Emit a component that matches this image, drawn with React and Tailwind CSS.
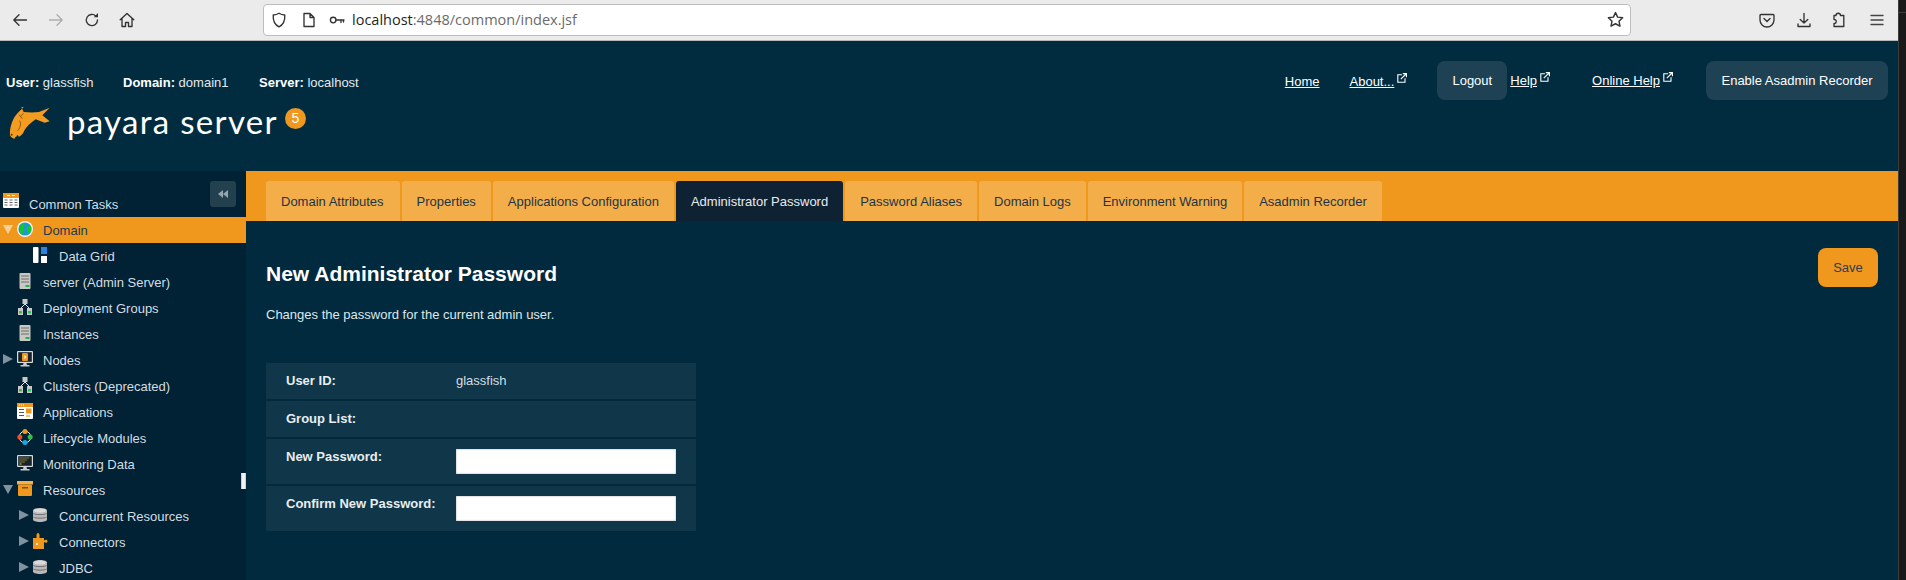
import React from 'react';

// browser toolbar glyphs
function ToolIcon({ children, className = 'text-[#333333]', size = 16 }) {
  return (
    <svg width={size} height={size} viewBox="0 0 16 16" fill="none" stroke="currentColor" strokeWidth="1.35" strokeLinecap="round" strokeLinejoin="round" className={className}>
      {children}
    </svg>
  );
}

function ExternalMark() {
  return (
    <svg width="10" height="10" viewBox="0 0 10 10" fill="none" stroke="#ffffff" strokeWidth="1.1" className="shrink-0">
      <path d="M5 1.8H.8v7.4h7.2V5.2" />
      <path d="M3.8 6.2 9 1M5.8.6h3.6v3.6" />
    </svg>
  );
}

function CalendarIcon() {
  return (
    <svg width="16" height="16" viewBox="0 0 16 16">
      <rect x="0" y="1" width="16" height="15" rx="1" fill="#fff" />
      <rect x="0" y="1" width="16" height="5" rx="1" fill="#f0981d" />
      <path d="M4 3.5h3M9 3.5h3" stroke="#fff" strokeWidth="1" />
      <path d="M1.5 8h3M6.5 8h3M11.5 8h3M1.5 10.5h3M6.5 10.5h3M11.5 10.5h3M1.5 13h3M6.5 13h3M11.5 13h3" stroke="#666" strokeWidth="1" />
    </svg>
  );
}

function GlobeIcon() {
  return (
    <svg width="16" height="16" viewBox="0 0 16 16">
      <circle cx="8" cy="8" r="8" fill="#f4f4f4" />
      <circle cx="8" cy="8" r="6.6" fill="#1b9ad6" />
      <path d="M2 5c2-1 4-2 5-3 1 2 0 5-1 6 1 2 0 4-1 6C3 12 2 8 2 5zM10 6c2-1 3-1 4-1 1 3 0 6-2 8-1-2-3-5-2-7z" fill="#18c62c" />
    </svg>
  );
}

function GridIcon() {
  return (
    <svg width="14" height="16" viewBox="0 0 14 16">
      <rect x="0" y="0" width="5.5" height="16" rx="1" fill="#fff" />
      <rect x="8" y="0" width="6" height="7" fill="#2a83e0" />
      <rect x="8" y="9" width="6" height="7" fill="#fff" />
    </svg>
  );
}

function ServerIcon() {
  return (
    <svg width="16" height="16" viewBox="0 0 16 16">
      <rect x="2.5" y="0" width="11" height="16" rx="1" fill="#c8c8c4" />
      <path d="M4 3h8M4 6h8M4 9h8" stroke="#6c6c6a" strokeWidth="1.2" />
      <rect x="8.5" y="12" width="4" height="2" fill="#2fae4a" />
    </svg>
  );
}

function TreeIcon() {
  return (
    <svg width="16" height="16" viewBox="0 0 16 16">
      <path d="M8 5 3.500 9.500M8 5l4.500 4.500" stroke="#e5e5e5" strokeWidth="1" fill="none" />
      <rect x="5.500" y="0" width="5" height="5" fill="#c9c9c9" />
      <rect x="1" y="9" width="5" height="7" fill="#c9c9c9" />
      <rect x="10" y="9" width="5" height="7" fill="#c9c9c9" />
      <rect x="2" y="12" width="3" height="2.500" fill="#2fc04d" />
      <rect x="11" y="12" width="3" height="2.500" fill="#2fc04d" />
    </svg>
  );
}

function NodesIcon() {
  return (
    <svg width="16" height="16" viewBox="0 0 16 16">
      <rect x="0" y="0" width="16" height="12" rx="1" fill="#d9d9d9" />
      <rect x="1.200" y="1.200" width="13.600" height="9.600" fill="#17242d" />
      <rect x="5" y="2" width="6" height="8" rx="1" fill="#f0981d" />
      <path d="M7.500 4v4l2-2z" fill="#fff" />
      <path d="M6.500 12h3l.5 2h2.500v1.500h-9V14H6z" fill="#c9c9c9" />
    </svg>
  );
}

function AppsIcon() {
  return (
    <svg width="16" height="16" viewBox="0 0 16 16">
      <rect x="0" y="0" width="16" height="16" rx="1" fill="#fff" />
      <rect x="0" y="0" width="16" height="4" fill="#f0981d" />
      <path d="M2 2h1M4 2h1M6 2h1" stroke="#fff" strokeWidth="1" />
      <path d="M2 6.500h5M2 9.500h5M2 12.500h5" stroke="#555" strokeWidth="1.200" />
      <rect x="9" y="5.500" width="5.500" height="5" fill="#f0981d" />
      <path d="M9 13h4" stroke="#f0981d" strokeWidth="1.200" />
    </svg>
  );
}

function LifecycleIcon() {
  return (
    <svg width="16" height="16" viewBox="0 0 16 16">
      <circle cx="8" cy="8" r="5.800" fill="none" stroke="#e9e9e9" strokeWidth="1" />
      <circle cx="8" cy="2.600" r="2.500" fill="#f0981d" />
      <circle cx="13.200" cy="8" r="2.500" fill="#2fc04d" />
      <circle cx="8" cy="13.400" r="2.500" fill="#1fa6e0" />
      <circle cx="2.800" cy="8" r="2.500" fill="#ee4d23" />
    </svg>
  );
}

function MonitorIcon() {
  return (
    <svg width="16" height="16" viewBox="0 0 16 16">
      <rect x="0" y="0" width="16" height="12" rx="1" fill="#d9d9d9" />
      <rect x="1.200" y="1.200" width="13.600" height="9.600" fill="#17242d" />
      <path d="M2.500 3h1M4.500 3h1M6.500 3h1M8.500 3h1M10.500 3h1M2.500 5h1M4.500 5h1M6.500 5h1M8.500 5h1M2.500 7h1M4.500 7h1M6.500 7h1M2.500 9h2" stroke="#e8c53a" strokeWidth="1" />
      <path d="M6.500 12h3l.5 2h2.500v1.500h-9V14H6z" fill="#c9c9c9" />
    </svg>
  );
}

function BoxIcon() {
  return (
    <svg width="16" height="16" viewBox="0 0 16 16">
      <rect x="0" y="0" width="16" height="3.500" fill="#f6b04a" />
      <rect x="1" y="3.500" width="14" height="11.500" rx="1" fill="#f0981d" />
      <rect x="5" y="6" width="6" height="1.500" fill="#7a4c10" />
    </svg>
  );
}

function DbIcon() {
  return (
    <svg width="14" height="14" viewBox="0 0 14 14">
      <path d="M0 2.500C0 1 3 0 7 0s7 1 7 2.500v9C14 13 11 14 7 14s-7-1-7-2.500z" fill="#b9b9b9" />
      <path d="M.3 5.500C2 7 12 7 13.700 5.500M.3 9C2 10.500 12 10.500 13.700 9" stroke="#6f6f6f" strokeWidth="1" fill="none" />
      <ellipse cx="7" cy="2.500" rx="6.300" ry="2" fill="#dadada" />
    </svg>
  );
}

function PuzzleIcon() {
  return (
    <svg width="16" height="16" viewBox="0 0 16 16">
      <path d="M0 5h3.500V2.500C3.500 1 4 0 5 0s1.500 1 1.500 2.500V5H11v2.500c1-1 3.500-1.200 3.500.8s-2.500 1.800-3.500.8V16H0z" fill="#f0981d" />
      <circle cx="4" cy="11" r="1" fill="#fff" />
    </svg>
  );
}

const navItems = [
  { label: 'Domain', icon: <GlobeIcon />, twisty: 'open', active: true },
  { label: 'Data Grid', icon: <GridIcon />, level: 1 },
  { label: 'server (Admin Server)', icon: <ServerIcon /> },
  { label: 'Deployment Groups', icon: <TreeIcon /> },
  { label: 'Instances', icon: <ServerIcon /> },
  { label: 'Nodes', icon: <NodesIcon />, twisty: 'closed' },
  { label: 'Clusters (Deprecated)', icon: <TreeIcon /> },
  { label: 'Applications', icon: <AppsIcon /> },
  { label: 'Lifecycle Modules', icon: <LifecycleIcon /> },
  { label: 'Monitoring Data', icon: <MonitorIcon /> },
  { label: 'Resources', icon: <BoxIcon />, twisty: 'open' },
  { label: 'Concurrent Resources', icon: <DbIcon />, twisty: 'closed', level: 1 },
  { label: 'Connectors', icon: <PuzzleIcon />, twisty: 'closed', level: 1 },
  { label: 'JDBC', icon: <DbIcon />, twisty: 'closed', level: 1 },
];

const tabs = [
  { label: 'Domain Attributes', extra: 'pr-[16px]' },
  { label: 'Properties' },
  { label: 'Applications Configuration' },
  { label: 'Administrator Password', active: true },
  { label: 'Password Aliases' },
  { label: 'Domain Logs' },
  { label: 'Environment Warning' },
  { label: 'Asadmin Recorder' },
];

function Twisty({ type, active }) {
  const color = active ? '#f8cf94' : '#7f929e';
  return (
    <svg width="10" height="10" viewBox="0 0 10 10" className="shrink-0 -mt-[3px]">
      {type === 'open' ? <path d="M0 1h10L5 10z" fill={color} /> : <path d="M0 0l10 5-10 5z" fill={color} />}
    </svg>
  );
}

function NavRow({ item }) {
  const sub = item.level === 1;
  return (
    <div className={`flex h-[26px] items-center ${item.active ? 'bg-[#f0981d] text-[#1e3a4c]' : 'text-[#d3dde3]'} ${sub ? 'pl-[19px]' : 'pl-[3px]'}`}>
      <div className="w-[14px] shrink-0">{item.twisty && <Twisty type={item.twisty} active={item.active} />}</div>
      <div className="w-[26px] shrink-0 -mt-[2px]">{item.icon}</div>
      <span>{item.label}</span>
    </div>
  );
}

function HeaderLink({ children, external, className = '' }) {
  return (
    <div className={`flex items-start gap-[3px] ${className}`}>
      <a className="underline text-white text-[13px] leading-[15px] mt-[1px]">{children}</a>
      {external && <ExternalMark />}
    </div>
  );
}

export default function App() {
  return (
    <div className="flex h-[580px] w-[1906px] overflow-hidden font-['Liberation_Sans',Arial,sans-serif] text-[13px] leading-[15px]">
      <div className="flex w-[1898px] flex-col">
        {/* browser chrome */}
        <div className="flex h-[41px] shrink-0 items-center border-b border-[#b8b8b8] bg-[#ebebeb] pb-[1px]">
          <div className="flex w-[263px] shrink-0 items-center pl-[12px]">
            <div className="w-[36px]">
              <ToolIcon><path d="M14.500 8H1.800M7 2.800 1.800 8 7 13.200" /></ToolIcon>
            </div>
            <div className="w-[36px]">
              <ToolIcon className="text-[#aeaeae]"><path d="M1.500 8h12.700M9 2.800 14.200 8 9 13.200" /></ToolIcon>
            </div>
            <div className="w-[35px]">
              <ToolIcon><path d="M13.500 8a5.600 5.600 0 1 1-1.700-4" /><path d="M14 1v4.300H9.800z" fill="currentColor" stroke="none" /></ToolIcon>
            </div>
            <ToolIcon><path d="M1.200 7.800 8 1.500l6.800 6.300M3 6.500v8h3.500v-4h3v4H13v-8" /></ToolIcon>
          </div>
          <div className="flex h-[32px] w-[1368px] shrink-0 items-center rounded-[4px] border border-[#bdbdbd] bg-white pl-[7px] pr-[6px] font-['Open_Sans',sans-serif] text-[14.5px]">
            <ToolIcon size={16}><path d="M8 1.200c2 1.300 3.800 1.700 5.800 1.800.3 5.500-1.500 9.800-5.800 11.800C3.700 12.800 1.900 8.500 2.200 3 4.200 2.900 6 2.500 8 1.200z" /></ToolIcon>
            <div className="ml-[14px]">
              <ToolIcon size={16}><path d="M3 1.500h6l4 4v9H3zM9 1.500v4h4" /></ToolIcon>
            </div>
            <div className="ml-[12px]">
              <ToolIcon size={16}><circle cx="4.200" cy="8" r="2.800" /><path d="M7 8h8M12 8v2.500M14.500 8v2" /></ToolIcon>
            </div>
            <span className="ml-[7px] text-[#1f1f1f]">localhost<span className="text-[#6b6b6b]">:4848/common/index.jsf</span></span>
            <div className="ml-auto">
              <ToolIcon size={17}><path d="m8 1.500 2 4.300 4.700.6-3.400 3.200.9 4.700L8 12l-4.200 2.300.9-4.700L1.300 6.400 6 5.800z" /></ToolIcon>
            </div>
          </div>
          <div className="ml-[128px]">
            <ToolIcon><path d="M2 2.500h12a1 1 0 0 1 1 1V8a7 7 0 0 1-14 0V3.500a1 1 0 0 1 1-1zM5 6.500l3 3 3-3" /></ToolIcon>
          </div>
          <div className="ml-[21px]">
            <ToolIcon><path d="M8 1.500v9.500M4.200 7.500 8 11l3.800-3.500M2 12v2.500h12V12" /></ToolIcon>
          </div>
          <div className="ml-[18px]">
            <ToolIcon><path d="M6 3.500c0-3 4.500-3 4.500 0h3.300v11H4v-3c3 .5 3-4.500 0-4V3.500z" /></ToolIcon>
          </div>
          <div className="ml-[23px]">
            <ToolIcon className="text-[#444]"><path d="M2 3.500h12M2 8h12M2 12.500h12" /></ToolIcon>
          </div>
        </div>

        {/* masthead */}
        <div className="flex h-[130px] shrink-0 justify-between bg-[#012c40] pt-[20px] pr-[10px] text-[#e3e9ed]">
          <div className="pl-[6px] pt-[14px]">
            <div className="flex">
              <div className="w-[117px]"><b className="text-white">User:</b> glassfish</div>
              <div className="w-[136px]"><b className="text-white">Domain:</b> domain1</div>
              <div><b className="text-white">Server:</b> localhost</div>
            </div>
            <div className="mt-[17px] flex items-start pl-[1px]">
              <svg width="44" height="34" viewBox="22 5 132 102" className="shrink-0">
                <path d="M65 5l7 15c18 2 33 2 46 0l32-13-22 23 22 18-15 4-27-10c-13 10-28 20-36 38-3 7-8 10-14 14l-5-6-3 6-3 1-3 6-10-6-3-5c-2-22 8-52 23-67 7-7 13-13 20-20z" fill="#f39c1f" />
                <path d="M72 24 62 34M58 28l10 12M60 46c4 8 4 18-6 30" stroke="#7a4c10" strokeWidth="2.500" fill="none" />
                <circle cx="36" cy="88" r="2.500" fill="#3a2506" />
              </svg>
              <span className="ml-[16px] -mt-[5px] font-['Lato',sans-serif] text-[33px] font-normal leading-[38px] tracking-[1.300px] text-white">payara server</span>
              <div className="ml-[7px] mt-[1px] flex h-[21px] w-[21px] items-center justify-center rounded-full bg-[#f0981d] text-[14px] text-white">5</div>
            </div>
          </div>
          <div className="flex h-[39px] items-center">
            <HeaderLink className="mt-[1px]">Home</HeaderLink>
            <HeaderLink external className="ml-[30px]">About...</HeaderLink>
            <button className="ml-[30px] h-[39px] w-[70px] rounded-[8px] bg-[#1e4153] text-white">Logout</button>
            <HeaderLink external className="ml-[3px] -mt-[2px]">Help</HeaderLink>
            <HeaderLink external className="ml-[42px] -mt-[2px]">Online Help</HeaderLink>
            <button className="ml-[33px] h-[39px] w-[182px] rounded-[8px] bg-[#1e4153] text-white">Enable Asadmin Recorder</button>
          </div>
        </div>

        <div className="flex min-h-0 flex-1">
          {/* tree */}
          <div className="relative w-[246px] shrink-0 overflow-hidden bg-[#012134] pt-[20px]">
            <div className="flex h-[26px] items-center pl-[3px] text-[#d3dde3]">
              <div className="w-[26px] shrink-0 -mt-[8px]"><CalendarIcon /></div>
              <span>Common Tasks</span>
            </div>
            {navItems.map((item) => (
              <NavRow key={item.label} item={item} />
            ))}
            <button className="absolute right-[10px] top-[10px] flex h-[26px] w-[26px] items-center justify-center rounded-[3px] bg-[#23404f]">
              <svg width="10" height="8" viewBox="0 0 10 8"><path d="M5 0v8L0 4zM10 0v8L5 4z" fill="#94a5af" /></svg>
            </button>
            <div className="absolute right-0 top-[302px] h-[16px] w-[5px] border-x border-[#c9d0d4] bg-[#f2f2f2]" />
          </div>

          {/* page */}
          <div className="flex min-w-0 flex-1 flex-col bg-[#012a3e]">
            <div className="flex h-[50px] shrink-0 items-end gap-[2px] bg-[#f0981d] pl-[20px]">
              {tabs.map((tab) => (
                <div
                  key={tab.label}
                  className={`flex h-[40px] items-center rounded-t-[3px] px-[15px] ${tab.extra || ''} ${tab.active ? 'bg-[#0f2233] text-[#e6ebee]' : 'bg-[#f3ae4a] text-[#1b3547]'}`}
                >
                  {tab.label}
                </div>
              ))}
            </div>
            <div className="flex items-start justify-between px-[20px] pt-[27px]">
              <div className="pt-[14px]">
                <h1 className="text-[21px] font-bold leading-[24px] text-white">New Administrator Password</h1>
                <p className="mt-[21px] text-[#dfe6ea]">Changes the password for the current admin user.</p>
                <div className="mt-[41px] flex w-[430px] flex-col gap-[2px] text-[#e8edf0]">
                  <div className="flex h-[36px] bg-[#0f3649] pl-[20px] pt-[10px]">
                    <b className="w-[170px]">User ID:</b>
                    <span className="text-[#d5dee3]">glassfish</span>
                  </div>
                  <div className="flex h-[36px] bg-[#0f3649] pl-[20px] pt-[10px]">
                    <b className="w-[170px]">Group List:</b>
                  </div>
                  <div className="flex h-[45px] bg-[#0f3649] pl-[20px] pt-[10px]">
                    <b className="w-[170px]">New Password:</b>
                    <input type="password" className="h-[25px] w-[220px] bg-white shadow-[inset_0_0_2px_#999]" />
                  </div>
                  <div className="flex h-[45px] bg-[#0f3649] pl-[20px] pt-[10px]">
                    <b className="w-[170px]">Confirm New Password:</b>
                    <input type="password" className="h-[25px] w-[220px] bg-white shadow-[inset_0_0_2px_#999]" />
                  </div>
                </div>
              </div>
              <button className="h-[39px] w-[60px] rounded-[8px] bg-[#f0981d] text-[#2b3f4c]">Save</button>
            </div>
          </div>
        </div>
      </div>
      {/* neighbouring window edge */}
      <div className="w-[8px] shrink-0 border-l border-[#3d3d3d] bg-[#191919]">
        <div className="mt-[12px] border-t border-[#3d3d3d]" />
      </div>
    </div>
  );
}
